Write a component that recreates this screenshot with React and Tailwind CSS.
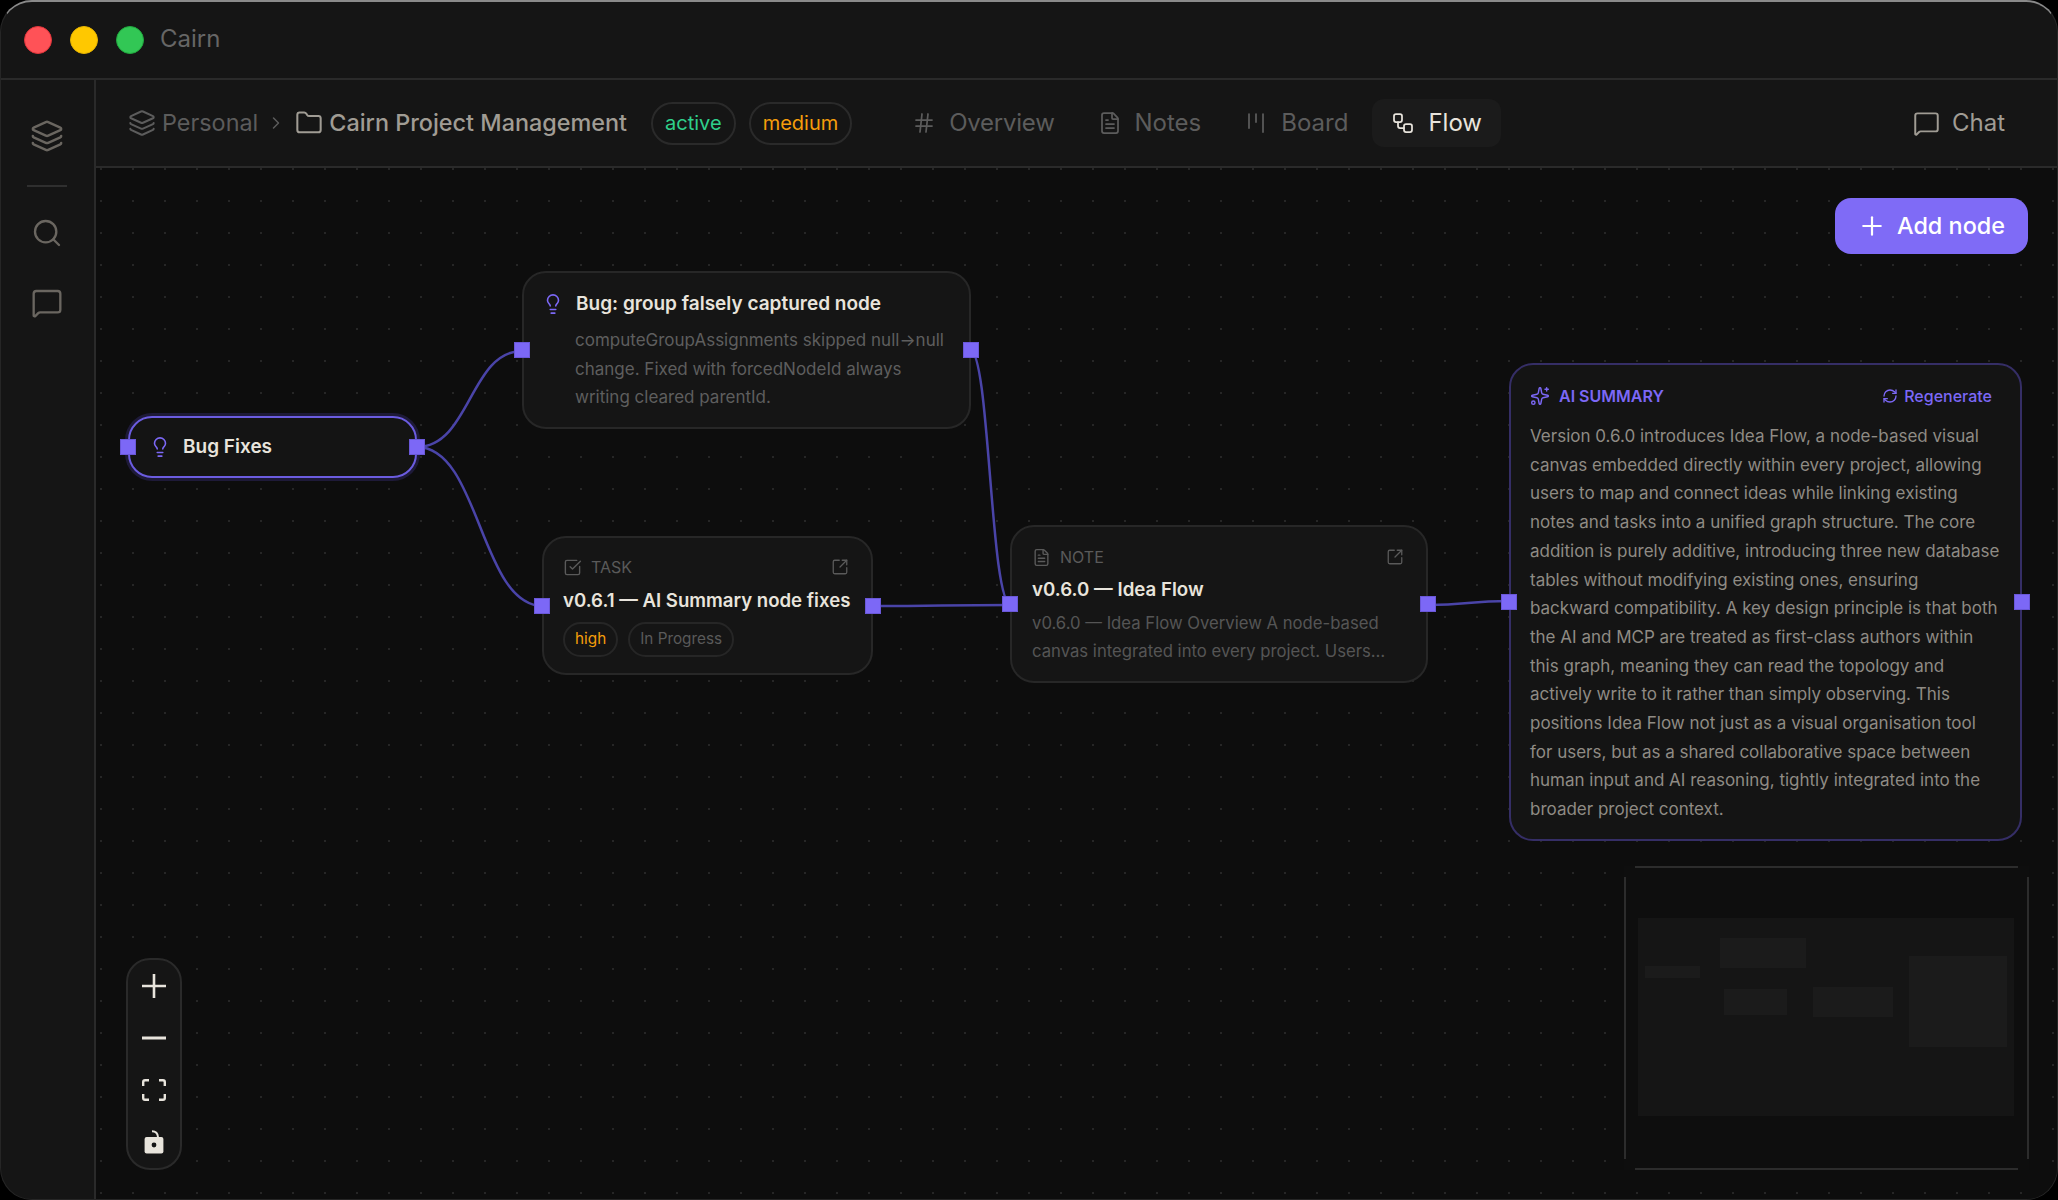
import React from "react";
import {
  ChevronRight,
  FileText,
  Folder,
  Hash,
  Kanban,
  Layers,
  Lightbulb,
  MessageSquare,
  Plus,
  RefreshCw,
  Search,
  Sparkles,
  SquareArrowOutUpRight,
  SquareCheckBig,
  Workflow,
} from "lucide-react";

const summaryLines = [
  "Version 0.6.0 introduces Idea Flow, a node-based visual",
  "canvas embedded directly within every project, allowing",
  "users to map and connect ideas while linking existing",
  "notes and tasks into a unified graph structure. The core",
  "addition is purely additive, introducing three new database",
  "tables without modifying existing ones, ensuring",
  "backward compatibility. A key design principle is that both",
  "the AI and MCP are treated as first-class authors within",
  "this graph, meaning they can read the topology and",
  "actively write to it rather than simply observing. This",
  "positions Idea Flow not just as a visual organisation tool",
  "for users, but as a shared collaborative space between",
  "human input and AI reasoning, tightly integrated into the",
  "broader project context.",
];

const edges = [
  "M321 279C374 279 374 183 426 183",
  "M321 279C384 279 384 438 447 438",
  "M874 182C894 182 894 437 915 437",
  "M777 438C846 438 846 437 915 437",
  "M1332 437C1372 437 1372 433 1413 433",
];

const tabs = [
  { title: "Overview", icon: Hash, textClass: "tracking-[-0.25px]" },
  { title: "Notes", icon: FileText },
  { title: "Board", icon: Kanban },
  { title: "Flow", icon: Workflow, active: true },
];

const Handle = ({ side }) => (
  <span
    className={`absolute top-1/2 -translate-y-1/2 w-4 h-4 bg-[#7c68f6] border border-[#6a58d8] ${
      side === "left" ? "-left-[10px]" : "-right-[10px]"
    }`}
  />
);

const Tab = ({ title, icon: Icon, active, textClass }) => (
  <div
    className={`flex items-center gap-[13px] h-12 px-[19px] rounded-xl ${
      active ? "bg-[#1b1b1b] text-[#e8e4dc]" : "text-[#5c5c5c]"
    }`}
  >
    <Icon size={24} strokeWidth={1.75} />
    <span className={textClass}>{title}</span>
  </div>
);

const Pill = ({ className, children }) => (
  <span className={`flex items-center h-[43px] px-[12px] rounded-full border-2 border-[#2a2a2a] text-[20px] ${className}`}>
    {children}
  </span>
);

const Badge = ({ className, children }) => (
  <span className={`flex items-center h-[35px] px-[10px] rounded-full border-2 border-[#262626] text-[15.3px] ${className}`}>
    {children}
  </span>
);

const ControlButton = ({ children }) => (
  <button className="flex items-center justify-center w-full h-[52px] text-[#e8e4dc]">{children}</button>
);

const Minimap = () => (
  <div className="absolute left-[1528px] top-[698px] w-[405px] h-[304px] bg-[#0e0e0e]">
    {/* viewport outline, the corners stay open */}
    <span className="absolute left-[11px] right-[11px] top-0 h-[2px] bg-[#2c2c2c]" />
    <span className="absolute left-[11px] right-[11px] bottom-0 h-[2px] bg-[#2c2c2c]" />
    <span className="absolute top-[11px] bottom-[11px] left-0 w-[2px] bg-[#2c2c2c]" />
    <span className="absolute top-[11px] bottom-[11px] right-0 w-[2px] bg-[#2c2c2c]" />
    <div className="absolute left-[14px] top-[52px] w-[376px] h-[198px] bg-[#151515]">
      <span className="absolute left-[7px] top-[48px] w-[55px] h-[12px] bg-[#1b1b1b]" />
      <span className="absolute left-[82px] top-[20px] w-[86px] h-[30px] bg-[#1b1b1b]" />
      <span className="absolute left-[86px] top-[71px] w-[63px] h-[26px] bg-[#1b1b1b]" />
      <span className="absolute left-[175px] top-[69px] w-[80px] h-[30px] bg-[#1b1b1b]" />
      <span className="absolute left-[271px] top-[38px] w-[98px] h-[91px] bg-[#1b1b1b]" />
    </div>
  </div>
);

export default function App() {
  return (
    <div className="w-[2058px] h-[1200px] bg-black font-['Inter',sans-serif]">
      <div className="flex flex-col w-full h-full rounded-[32px] overflow-hidden border border-[#262626] border-t-2 border-t-[#8a8a8a] bg-[#151515]">
        {/* Title bar */}
        <div className="flex items-center shrink-0 h-[78px] pl-[23px] gap-[18px] border-b-2 border-[#2a2a2a]">
          <span className="w-7 h-7 rounded-full bg-[#ff5257] border border-[#e0353b]" />
          <span className="w-7 h-7 rounded-full bg-[#ffc800] border border-[#e6b400]" />
          <span className="w-7 h-7 rounded-full bg-[#32c755] border border-[#22a83f]" />
          <span className="-ml-[2px] pb-[2px] text-[24px] text-[#666666]">Cairn</span>
        </div>

        <div className="flex flex-1 min-h-0">
          {/* Icon rail */}
          <div className="flex flex-col items-center shrink-0 w-[95px] pr-[1px] border-r-2 border-[#2a2a2a] text-[#6a6660]">
            <Layers size={34} strokeWidth={1.75} className="mt-[39px]" />
            <span className="w-10 h-[2px] mt-[32px] bg-[#2f2f2f]" />
            <Search size={32} strokeWidth={1.75} className="mt-[30px]" />
            <MessageSquare size={32} strokeWidth={1.75} className="mt-[38px]" />
          </div>

          <div className="flex flex-col flex-1 min-w-0">
            {/* Project header */}
            <div className="flex items-center shrink-0 h-[88px] pl-[32px] pr-[32px] border-b-2 border-[#2a2a2a] text-[24px]">
              <Layers size={28} strokeWidth={1.75} className="text-[#5c5c5c]" />
              <span className="ml-[6px] text-[23.4px] text-[#5c5c5c]">Personal</span>
              <ChevronRight size={20} strokeWidth={1.75} className="ml-[8px] text-[#5c5c5c]" />
              <Folder size={28} strokeWidth={1.75} className="ml-[9px] text-[#a09c94]" />
              <span className="ml-[6px] text-[23.4px] font-medium text-[#a09c94]">Cairn Project Management</span>
              <div className="flex gap-[13px] ml-6">
                <Pill className="text-[#2fcf8b]">active</Pill>
                <Pill className="text-[#f59e0b]">medium</Pill>
              </div>
              <div className="flex gap-[5px] ml-[41px]">
                {tabs.map((tab) => (
                  <Tab key={tab.title} {...tab} />
                ))}
              </div>
              <div className="flex items-center gap-[12px] ml-auto pr-5 text-[#a09c94]">
                <MessageSquare size={27} strokeWidth={1.75} />
                <span>Chat</span>
              </div>
            </div>

            {/* Flow canvas */}
            <div className="relative flex-1 bg-[#0d0d0d] bg-[radial-gradient(circle,#262626_1px,transparent_1.2px)] bg-[length:32px_32px] bg-[position:-11px_-15px]">
              <svg className="absolute inset-0 w-full h-full" fill="none">
                {edges.map((d) => (
                  <path key={d} d={d} stroke="#4a44a8" strokeWidth="2.5" />
                ))}
              </svg>

              <button className="absolute left-[1739px] top-[30px] flex items-center gap-[10px] w-[193px] h-[56px] pl-[22px] rounded-2xl bg-[#7f6bf6] text-[23.4px] font-medium text-white">
                <Plus size={30} strokeWidth={1.75} />
                Add node
              </button>

              {/* Bug Fixes group */}
              <div className="absolute left-[32px] top-[248px] flex items-center gap-[12px] w-[289px] h-[62px] pl-[19px] rounded-[24px] border-2 border-[#6b5ce0] bg-[#141414] ring-[3px] ring-[#1e1a38]">
                <Handle side="left" />
                <Handle side="right" />
                <Lightbulb size={22} strokeWidth={1.75} className="text-[#7c68f6]" />
                <span className="text-[19px] font-semibold text-[#e8e4dc]">Bug Fixes</span>
              </div>

              {/* Idea node */}
              <div className="absolute left-[426px] top-[103px] w-[449px] h-[158px] pt-[19px] pl-[18px] rounded-[24px] border-2 border-[#272727] bg-[#151515]">
                <Handle side="left" />
                <Handle side="right" />
                <div className="flex items-center gap-[12px] h-6">
                  <Lightbulb size={22} strokeWidth={1.75} className="text-[#7c68f6]" />
                  <span className="text-[19px] font-semibold text-[#e8e4dc]">Bug: group falsely captured node</span>
                </div>
                <p className="mt-[10px] pl-[33px] text-[17px] leading-[28.5px] text-[#5e5e5e] whitespace-nowrap">
                  computeGroupAssignments skipped null→null
                  <br />
                  change. Fixed with forcedNodeId always
                  <br />
                  writing cleared parentId.
                </p>
              </div>

              {/* Task node */}
              <div className="absolute left-[446px] top-[368px] w-[331px] h-[139px] pt-[19px] px-[19px] rounded-[24px] border-2 border-[#272727] bg-[#151515]">
                <Handle side="left" />
                <Handle side="right" />
                <div className="flex items-center h-[20px] text-[#5a5a5a]">
                  <SquareCheckBig size={19} strokeWidth={1.75} />
                  <span className="ml-[9px] text-[16px]">TASK</span>
                  <SquareArrowOutUpRight size={18} strokeWidth={1.75} className="ml-auto mr-[3px]" />
                </div>
                <div className="mt-[9px] h-7 leading-7 text-[18.6px] font-semibold text-[#e8e4dc] whitespace-nowrap">
                  v0.6.1 — AI Summary node fixes
                </div>
                <div className="flex gap-[10px] mt-[8px]">
                  <Badge className="text-[#f59e0b]">high</Badge>
                  <Badge className="text-[#5a5a5a]">In Progress</Badge>
                </div>
              </div>

              {/* Note node */}
              <div className="absolute left-[914px] top-[357px] w-[418px] h-[158px] pt-[20px] px-[20px] rounded-[24px] border-2 border-[#272727] bg-[#151515]">
                <Handle side="left" />
                <Handle side="right" />
                <div className="flex items-center h-[20px] text-[#5a5a5a]">
                  <FileText size={19} strokeWidth={1.75} />
                  <span className="ml-[9px] text-[16px]">NOTE</span>
                  <SquareArrowOutUpRight size={18} strokeWidth={1.75} className="ml-auto mr-[2px]" />
                </div>
                <div className="mt-[9px] h-7 leading-7 text-[18.7px] font-semibold text-[#e8e4dc]">v0.6.0 — Idea Flow</div>
                <p className="mt-[5px] text-[16.7px] leading-[28px] text-[#555555] whitespace-nowrap">
                  v0.6.0 — Idea Flow Overview A node-based
                  <br />
                  canvas integrated into every project. Users…
                </p>
              </div>

              {/* AI summary */}
              <div className="absolute left-[1413px] top-[195px] w-[513px] h-[478px] pt-[19px] pl-[19px] pr-[28px] rounded-[24px] border-2 border-[#352e66] bg-[#141414]">
                <Handle side="left" />
                <Handle side="right" />
                <div className="flex items-center h-[24px] text-[#7c68f6] text-[16px]">
                  <Sparkles size={20} strokeWidth={1.75} />
                  <span className="ml-[9px] font-semibold">AI SUMMARY</span>
                  <RefreshCw size={16} strokeWidth={2} className="ml-auto" />
                  <span className="ml-[6px] font-medium">Regenerate</span>
                </div>
                <div className="mt-[14px] text-[17px] leading-[28.7px] text-[#8f8b84] whitespace-nowrap">
                  {summaryLines.map((line) => (
                    <div key={line}>{line}</div>
                  ))}
                </div>
              </div>

              <Minimap />

              {/* Zoom controls */}
              <div className="absolute left-[30px] top-[790px] flex flex-col w-[56px] h-[212px] rounded-[24px] border-2 border-[#2a2a2a] bg-[#151515]">
                <ControlButton>
                  <svg width="24" height="24" viewBox="0 0 24 24" stroke="currentColor" strokeWidth="2.6">
                    <path d="M0 12h24M12 0v24" />
                  </svg>
                </ControlButton>
                <ControlButton>
                  <svg width="24" height="24" viewBox="0 0 24 24" stroke="currentColor" strokeWidth="2.8">
                    <path d="M0 12h24" />
                  </svg>
                </ControlButton>
                <ControlButton>
                  <svg width="24" height="22" viewBox="0 0 24 22" fill="none" stroke="currentColor" strokeWidth="2.4">
                    <path d="M7 1.2H3A1.8 1.8 0 0 0 1.2 3v4M17 1.2h4A1.8 1.8 0 0 1 22.800 3v4M7 20.800H3A1.8 1.8 0 0 1 1.2 19v-4M17 20.800h4a1.800 1.800 0 0 0 1.800-1.800v-4" />
                  </svg>
                </ControlButton>
                <ControlButton>
                  <svg width="20" height="24" viewBox="0 0 20 24" fill="currentColor">
                    <path d="M8 1.200c3.600 0 5.800 2.400 6 6" fill="none" stroke="currentColor" strokeWidth="2" />
                    <rect x="0.600" y="7" width="18.800" height="16.500" rx="2" />
                    <circle cx="10" cy="15" r="2.400" fill="#151515" />
                  </svg>
                </ControlButton>
              </div>
            </div>
          </div>
        </div>
      </div>
    </div>
  );
}
